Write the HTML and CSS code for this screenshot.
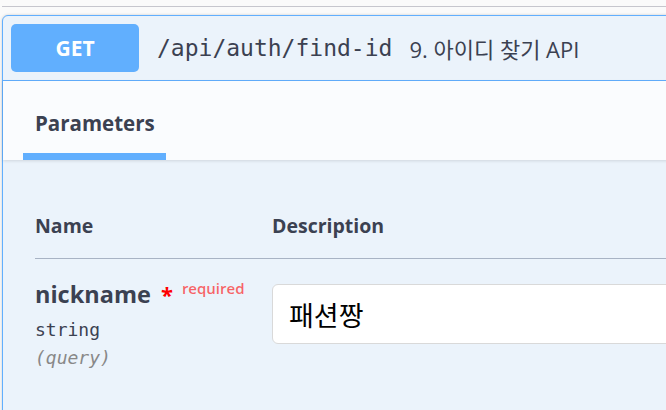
FILE: index.html
```html
<!DOCTYPE html>
<html lang="ko">
<head>
<meta charset="utf-8">
<title>find-id</title>
<link rel="stylesheet" href="styles.css">
</head>
<body>
<div class="page">
  <div class="tagbar"></div>
  <div class="opblock">
    <div class="summary">
      <span class="method">GET</span>
      <span class="path">/api/auth/find-id</span>
      <span class="desc">9. 아이디 찾기 API</span>
    </div>
    <div class="section-header">
      <div class="tab">
        <span class="tab-label">Parameters</span>
        <span class="tab-bar"></span>
      </div>
    </div>
    <div class="params">
      <div class="row head">
        <div class="col-name">Name</div>
        <div class="col-desc">Description</div>
      </div>
      <div class="row param">
        <div class="col-name">
          <div class="pname">nickname<span class="star">*</span><span class="req">required</span></div>
          <div class="ptype">string</div>
          <div class="pin">(query)</div>
        </div>
        <div class="col-desc input-cell">
          <input class="field" type="text" value="패션짱">
        </div>
      </div>
    </div>
  </div>
</div>
</body>
</html>
```
FILE: styles.css
```css
html, body {
  margin: 0;
  padding: 0;
  background: #fafafa;
  overflow: hidden;
  height: 410px;
}
.page {
  padding-left: 2px;
  font-family: "Open Sans", "Noto Sans CJK KR", sans-serif;
  color: #3b4151;
}
.tagbar {
  height: 6px;
  border-bottom: 1px solid #c6c6cd;
}
.opblock {
  margin-top: 8px;
  width: 720px;
  border: 1px solid #61affe;
  border-radius: 6px 0 0 0;
  background: #ebf3fb;
  box-shadow: 0 0 3px rgba(0, 0, 0, 0.19);
  height: 420px;
}
.summary {
  display: flex;
  align-items: center;
  padding: 8px;
  border-bottom: 1px solid #61affe;
}
.method {
  width: 128px;
  height: 48px;
  border-radius: 5px;
  background: #61affe;
  color: #fff;
  font-weight: 700;
  font-size: 21px;
  display: flex;
  align-items: center;
  justify-content: center;
}
.path {
  margin-left: 18px;
  font-family: "DejaVu Sans Mono", monospace;
  font-size: 23px;
}
.desc {
  margin-left: 17px;
  font-size: 22px;
}
.section-header {
  display: flex;
  padding: 27px 0 0 20px;
  background: #fafcfe;
  box-shadow: 0 1px 3px rgba(0, 0, 0, 0.12);
  position: relative;
}
.tab {
  display: flex;
  flex-direction: column;
  width: 143px;
}
.tab-label {
  padding-left: 12px;
  line-height: 30px;
  font-size: 20.5px;
  font-weight: 700;
}
.tab-bar {
  margin-top: 15px;
  height: 7px;
  background: #61affe;
}
.params {
  padding: 52px 0 0 32px;
}
.row {
  display: flex;
}
.head {
  line-height: 28px;
  font-size: 19.5px;
  font-weight: 700;
  padding-bottom: 18px;
  border-bottom: 1px solid #a8b3c4;
}
.col-name {
  width: 237px;
  flex: none;
}
.param {
  padding-top: 20px;
}
.pname {
  font-size: 23.5px;
  font-weight: 700;
  line-height: 30px;
  white-space: nowrap;
}
.star {
  margin-left: 10px;
  color: #ff0000;
  font-size: 22px;
}
.req {
  position: relative;
  top: -9px;
  padding-left: 9px;
  font-size: 15px;
  font-weight: 600;
  color: rgba(255, 0, 0, 0.6);
}
.ptype {
  margin-top: 4px;
  font-family: "DejaVu Sans Mono", monospace;
  font-size: 18px;
  line-height: 28px;
}
.pin {
  font-family: "DejaVu Sans Mono", monospace;
  font-size: 18px;
  line-height: 28px;
  font-style: italic;
  color: #888888;
}
.input-cell {
  padding-top: 5px;
}
.field {
  box-sizing: border-box;
  width: 500px;
  height: 60px;
  padding: 0 0 0 16px;
  border: 1px solid #d9d9d9;
  border-radius: 6px;
  background: #fff;
  font-family: "Noto Sans CJK KR", sans-serif;
  font-size: 27px;
  color: #000;
  outline: none;
}
```
